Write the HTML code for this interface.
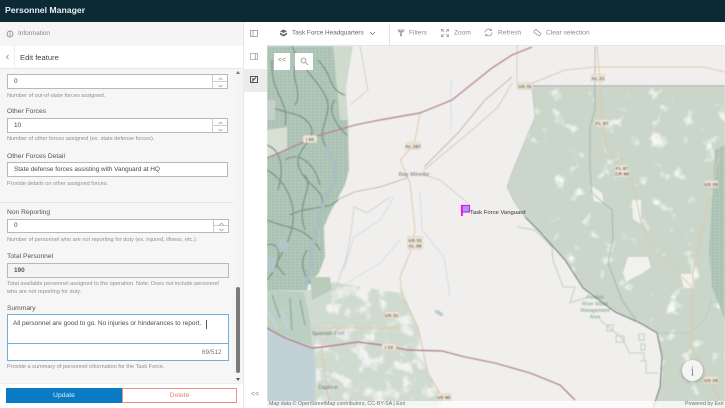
<!DOCTYPE html>
<html><head><meta charset="utf-8"><style>
*{box-sizing:border-box}
html,body{margin:0;padding:0;width:725px;height:408px;overflow:hidden;background:#fff;font-family:"Liberation Sans",sans-serif}
.a{position:absolute}
.lbl{position:absolute;font-size:6.7px;color:#555;white-space:nowrap;margin-top:1.500px}
.hint{position:absolute;font-size:5.6px;color:#8f8f8f;white-space:nowrap;line-height:8px}
.inp{position:absolute;background:#fff;border:1px solid #b8b8b8;font-size:6.4px;color:#4a4a4a;padding-left:6px;white-space:nowrap}
.spin{position:absolute;width:15px;border-left:1px solid #ccc;right:0;top:0;bottom:0}
.spin i{position:absolute;left:0;right:0;height:50%;display:block}
.spin i:first-child{top:0;border-bottom:1px solid #ccc}
.spin i:last-child{bottom:0}
.spin svg{position:absolute;left:4px;top:2px}
.tb{position:absolute;top:33px;transform:translateY(-50%);font-size:6.600px;color:#8a8a8a;white-space:nowrap}
.sh{font:600 4.8px "Liberation Sans",sans-serif;fill:#555;text-anchor:middle}
</style></head><body>

<div class="a" style="left:0;top:0;width:725px;height:22px;background:#0b2a36"></div>
<div class="a" style="left:5px;top:5px;font-size:8.700px;font-weight:bold;color:#e8eef0;white-space:nowrap">Personnel Manager</div>

<!-- left panel -->
<div class="a" style="left:0;top:22px;width:243px;height:386px;background:#f6f6f6"></div>
<div class="a" style="left:0;top:22px;width:243px;height:24px;background:#f5f5f5;"></div>
<svg class="a" style="left:6px;top:30px" width="8" height="8" viewBox="0 0 8 8"><circle cx="4" cy="4" r="3" fill="none" stroke="#777" stroke-width=".7"/><path d="M4 3.400V6M4 2v.7" stroke="#777" stroke-width=".7"/></svg>
<div class="a" style="left:18px;top:30px;font-size:6.400px;color:#888;white-space:nowrap">Information</div>
<div class="a" style="left:0;top:46px;width:243px;height:23px;background:#fff;border-bottom:1px solid #e8e8e8"></div>
<div class="a" style="left:14px;top:46px;width:1px;height:23px;background:#ececec"></div>
<svg class="a" style="left:5px;top:54px" width="5" height="6" viewBox="0 0 5 6"><path d="M3.500 1L1.500 3l2 2" fill="none" stroke="#777" stroke-width=".7"/></svg>
<div class="a" style="left:20px;top:53px;font-size:7.600px;color:#444;white-space:nowrap">Edit feature</div>

<div class="inp" style="left:7px;top:74px;width:221px;height:15px;line-height:13px">0<div class="spin"><i><svg width="7" height="4"><path d="M1.500 3L3.500 1.200 5.500 3" fill="none" stroke="#888" stroke-width=".6"/></svg></i><i><svg width="7" height="4"><path d="M1.500 1L3.500 2.800 5.500 1" fill="none" stroke="#888" stroke-width=".6"/></svg></i></div></div>
<div class="hint" style="left:7px;top:92px">Number of out-of-state forces assigned.</div>
<div class="lbl" style="left:7px;top:106px">Other Forces</div>
<div class="inp" style="left:7px;top:118px;width:221px;height:15px;line-height:13px">10<div class="spin"><i><svg width="7" height="4"><path d="M1.500 3L3.500 1.200 5.500 3" fill="none" stroke="#888" stroke-width=".6"/></svg></i><i><svg width="7" height="4"><path d="M1.500 1L3.500 2.800 5.500 1" fill="none" stroke="#888" stroke-width=".6"/></svg></i></div></div>
<div class="hint" style="left:7px;top:135px">Number of other forces assigned (ex. state defense forces).</div>
<div class="lbl" style="left:7px;top:151px">Other Forces Detail</div>
<div class="inp" style="left:7px;top:162px;width:221px;height:15px;line-height:13px">State defense forces assisting with Vanguard at HQ</div>
<div class="hint" style="left:7px;top:180px">Provide details on other assigned forces.</div>
<div class="a" style="left:0;top:202px;width:233px;height:1px;background:#e6e6e6"></div>
<div class="lbl" style="left:7px;top:207px">Non Reporting</div>
<div class="inp" style="left:7px;top:219px;width:222px;height:14px;line-height:12px">0<div class="spin"><i><svg width="7" height="4"><path d="M1.500 3L3.500 1.200 5.500 3" fill="none" stroke="#888" stroke-width=".6"/></svg></i><i><svg width="7" height="4"><path d="M1.500 1L3.500 2.800 5.500 1" fill="none" stroke="#888" stroke-width=".6"/></svg></i></div></div>
<div class="hint" style="left:7px;top:236px">Number of personnel who are not reporting for duty (ex. injured, illness, etc.).</div>
<div class="lbl" style="left:7px;top:251px">Total Personnel</div>
<div class="inp" style="left:7px;top:263px;width:222px;height:15px;line-height:13px;background:#f3f3f3;font-weight:bold;color:#555">190</div>
<div class="hint" style="left:7px;top:280px;width:222px;white-space:normal">Total available personnel assigned to the operation. Note: Does not include personnel who are not reporting for duty.</div>
<div class="lbl" style="left:7px;top:303px">Summary</div>
<div class="a" style="left:7px;top:314px;width:222px;height:47px;background:#fff;border:1px solid #6cb3dc"></div>
<div class="a" style="left:8px;top:343px;width:220px;height:1px;background:#6cb3dc"></div>
<div class="a" style="left:13px;top:320px;font-size:6.500px;color:#4a4a4a;white-space:nowrap">All personnel are good to go. No injuries or hinderances to report.</div>
<div class="a" style="left:206px;top:320px;width:1px;height:9px;background:#555"></div>
<div class="a" style="left:202px;top:349px;font-size:6.400px;color:#777">69/512</div>
<div class="hint" style="left:7px;top:363px">Provide a summary of personnel information for the Task Force.</div>

<!-- scrollbar -->
<div class="a" style="left:234px;top:69px;width:9px;height:314px;background:#f4f4f4"></div>
<div class="a" style="left:236px;top:287px;width:4px;height:86px;background:#7b7b7b;border-radius:2px"></div>
<div class="a" style="left:236px;top:71px;width:0;height:0;border:2.500px solid transparent;border-bottom:3px solid #777;border-top:0"></div>
<div class="a" style="left:236px;top:378px;width:0;height:0;border:2.500px solid transparent;border-top:3px solid #555;border-bottom:0"></div>

<div class="a" style="left:0;top:383px;width:243px;height:25px;background:#fff;border-top:1px solid #eee"></div>
<div class="a" style="left:6px;top:388px;width:116px;height:15px;background:#0a7ac4;color:#d9eefb;font-size:6.800px;text-align:center;line-height:15px">Update</div>
<div class="a" style="left:122px;top:388px;width:115px;height:15px;background:#fff;border:1px solid #ee8d85;color:#e98379;font-size:6.800px;text-align:center;line-height:13px">Delete</div>

<!-- rail -->
<div class="a" style="left:243px;top:22px;width:24px;height:386px;background:#fff;border-left:1px solid #e8e8e8"></div>
<div class="a" style="left:243px;top:69px;width:24px;height:23px;background:#ececec"></div>
<svg class="a" style="left:250px;top:30px" width="9" height="8" viewBox="0 0 9 8"><rect x=".5" y=".5" width="7" height="6" fill="none" stroke="#888" stroke-width=".7"/><path d="M3 .500v6" stroke="#888" stroke-width=".7"/></svg>
<svg class="a" style="left:250px;top:53px" width="9" height="8" viewBox="0 0 9 8"><rect x=".5" y=".5" width="7" height="6" fill="none" stroke="#999" stroke-width=".7"/><path d="M5.500 .500v6" stroke="#999" stroke-width=".7"/></svg>
<svg class="a" style="left:250px;top:76px" width="9" height="8" viewBox="0 0 9 8"><rect x=".5" y=".5" width="7" height="6" fill="none" stroke="#444" stroke-width=".9"/><path d="M2 5.500l4-4M2 3h2" stroke="#444" stroke-width=".9"/></svg>
<div class="a" style="left:251px;top:391px;font-size:7px;color:#888">&lt;&lt;</div>

<!-- top bar -->
<div class="a" style="left:267px;top:22px;width:458px;height:24px;background:#fff;border-bottom:1px solid #e4e4e4"></div>
<div class="a" style="left:389px;top:24px;width:1px;height:21px;background:#e2e2e2"></div>
<svg class="a" style="left:279px;top:29px" width="9" height="8" viewBox="0 0 9 8"><path d="M4.500 .500L8 2.200 4.500 4 1 2.200z" fill="#666"/><path d="M1 3.500L4.500 5.500 8 3.500V5.500L4.500 7.500 1 5.500z" fill="#666"/></svg>
<div class="tb" style="left:292px;color:#666;font-size:6.400px">Task Force Headquarters</div>
<svg class="a" style="left:369px;top:31px" width="7" height="5"><path d="M1 1l2.500 2.500L6 1" fill="none" stroke="#666" stroke-width=".7"/></svg>
<svg class="a" style="left:397px;top:29px" width="8" height="8" viewBox="0 0 8 8"><path d="M.5 1h7M1.500 1L3.500 4v3l1-.5V4l2-3M1.500 2.500h5" fill="none" stroke="#888" stroke-width=".7"/></svg>
<div class="tb" style="left:409px">Filters</div>
<svg class="a" style="left:441px;top:29px" width="8" height="8" viewBox="0 0 8 8"><path d="M.5 2.500v-2h2M5.500.5h2v2M7.500 5.500v2h-2M2.500 7.500h-2v-2M1 1l2 2M7 1L5 3M7 7L5 5M1 7l2-2" fill="none" stroke="#888" stroke-width=".7"/></svg>
<div class="tb" style="left:454px">Zoom</div>
<svg class="a" style="left:484px;top:28px" width="9" height="9" viewBox="0 0 9 9"><path d="M1 4.500a3.500 3.500 0 0 1 6-2.400M8 4.500a3.500 3.500 0 0 1-6 2.400M7.300.8v1.700H5.600M1.700 8.200V6.500h1.700" fill="none" stroke="#888" stroke-width=".7"/></svg>
<div class="tb" style="left:498px">Refresh</div>
<svg class="a" style="left:533px;top:29px" width="9" height="8" viewBox="0 0 9 8"><path d="M1 2l2-1.500 5 4L6.500 7 1 3.500zM2.500 .500l-1 1" fill="none" stroke="#888" stroke-width=".7"/></svg>
<div class="tb" style="left:546px">Clear selection</div>

<!-- map -->
<svg class="a" style="left:267px;top:46px" width="458" height="362" viewBox="267 46 458 362">
<defs>
<filter id="b" x="-5%" y="-5%" width="110%" height="110%"><feGaussianBlur stdDeviation=".5"/></filter>
<filter id="m" x="0" y="0" width="100%" height="100%"><feTurbulence type="fractalNoise" baseFrequency=".06" numOctaves="3" seed="7"/><feColorMatrix values="0 0 0 0 .93  0 0 0 0 .94  0 0 0 0 .91  5 0 0 0 -3.150"/></filter>
<filter id="m2" x="0" y="0" width="100%" height="100%"><feTurbulence type="fractalNoise" baseFrequency=".07" numOctaves="3" seed="3"/><feColorMatrix values="0 0 0 0 .89  0 0 0 0 .89  0 0 0 0 .88  5 0 0 0 -2.600"/></filter>
<pattern id="h" width="4" height="3" patternUnits="userSpaceOnUse"><rect width="4" height="3" fill="#b3c8bb"/><path d="M0 1h2.500" stroke="#8fac9f" stroke-width=".7"/></pattern>
<clipPath id="ef"><path d="M532 87H725V408H653L660 387L662 357L657 333L640 323L615 312L583 288L565 260L540 232L525 217L515 203L507 187L513 170L520 153L535 117Z"/></clipPath>
<clipPath id="bf"><path d="M333 282L400 293L402 290L418 327L428 373L440 393L445 408H267V340L314 350L320 300Z"/></clipPath>
</defs>
<g filter="url(#b)">
<rect x="267" y="46" width="458" height="362" fill="#f0efed"/>
<!-- east forest -->
<path d="M532 87H725V408H653L660 387L662 357L657 333L640 323L615 312L583 288L565 260L540 232L525 217L515 203L507 187L513 170L520 153L535 117Z" fill="#c9d6c9"/>
<g clip-path="url(#ef)"><rect x="500" y="85" width="225" height="323" filter="url(#m)"/></g>
<g fill="#f1f2ed"><path d="M628 257h20l3 10-8 6-8 4-9 5-3-9z"/><path d="M680 274h14v14h-10z"/><path d="M590 185l12 8 2 10-10-2z"/><path d="M632 200h9v24l-8-5z"/></g>
<!-- east teal edge -->
<path d="M715 150L725 145V320L712 287L709 250Z" fill="url(#h)"/>
<!-- west forest -->
<path d="M267 46H352L345 87L348 120L349 170L345 185L330 213L324 227L325 257L319 273L310 282L300 300L267 300Z" fill="url(#h)"/>
<path d="M333 46H353L346 87L348 120H340Z" fill="#cfdbcc"/>
<path d="M267 130L287 127V150L267 157Z" fill="#d7e0d2"/>
<g fill="none" stroke="#79997f" stroke-width="1.300">
<path d="M292 46C302 70 314 75 325 95S312 130 328 150"/><path d="M267 105C285 115 300 110 310 125S290 150 300 170 330 190 320 215"/><path d="M272 60C270 95 290 100 285 125"/><path d="M267 170C285 180 300 205 290 235S270 260 285 275"/><path d="M290 215C310 205 330 210 338 200"/><path d="M267 220C290 230 305 225 320 250"/><path d="M318 60C333 75 328 90 345 95"/><path d="M307 250C297 265 307 280 312 285"/><path d="M267 145C280 150 285 165 278 190"/><path d="M305 175C315 190 295 200 305 230"/><path d="M335 100C325 110 340 130 347 135"/><path d="M300 60C285 75 305 90 295 105"/><path d="M267 245C280 240 285 260 267 280"/><path d="M285 160C300 150 315 165 320 185"/></g>
<path d="M325 147C335 160 337 170 335 180S326 195 324 203L318 225L314 240L309 270L304 297" fill="none" stroke="#a9bfc3" stroke-width="3.500"/>
<circle cx="283" cy="246" r="6" fill="#b3c5cb"/><rect x="267" y="258" width="8" height="14" fill="#b3c5cb"/>
<path d="M267 100h8v20h-8z" fill="#c6cfc9"/>
<!-- bottom-left -->
<path d="M333 282L400 293L402 290L418 327L428 373L440 393L445 408H267V290L320 290Z" fill="#d0dbd0"/>
<g clip-path="url(#bf)"><rect x="267" y="280" width="180" height="128" filter="url(#m2)"/></g>
<path d="M310 277H330L332 290L312 300Z" fill="#b9cbb9"/>
<!-- bay -->
<path d="M267 327L290 338L314 348L316 375L314 408H267Z" fill="#c2d1d6"/>
<path d="M267 290L304 292L310 320L312 346L285 337L267 327Z" fill="#bcd0c2"/>
<path d="M272 295L280 318M290 298L292 330M300 300L305 325" stroke="#8fb0a3" stroke-width="1.500" fill="none"/>
<path d="M267 310l10 18M282 310l5 18" stroke="#c2d1d6" stroke-width="3" fill="none"/>
<ellipse cx="439" cy="313" rx="5" ry="2" fill="#b9ccd4" transform="rotate(30 439 313)"/>
<!-- green outlines -->
<g fill="none" stroke="#c8d5c5" stroke-width="1.300"><path d="M517 227l18 3 17 17 1 13 10 27h12l-5 16 18-6"/><rect x="607" y="325" width="6" height="6"/><rect x="616" y="336" width="8" height="6"/><rect x="639" y="334" width="5" height="6"/><rect x="641" y="344" width="4" height="6"/><path d="M630 353h14v8M640 361h6v12h12"/><path d="M600 320l22 18 8 16"/></g>
<!-- state line -->
<path d="M532 86H725" stroke="#a5a5a2" stroke-width="1.300"/>
<path d="M517 46V85" stroke="#a8a8a6" stroke-width=".7" stroke-dasharray="2 1"/>
<!-- dark river boundary -->
<path d="M525 217L540 232L565 260L583 288L615 312L640 323L657 333L662 357L660 387L653 408" fill="none" stroke="#5f6c69" stroke-width="1"/>
<path d="M532 87L535 117L520 153L513 170L507 187L515 203L525 217" fill="none" stroke="#c3c6bf" stroke-width=".8"/>
<!-- roads grey -->
<g fill="none" stroke="#c3c4c2" stroke-width=".7">
<path d="M390 197L367 213L354 207"/><path d="M354 207C352 225 350 245 345 262L335 290"/>
<path d="M657 333H690L705 320L712 300"/><path d="M360 46L368 90L350 105"/>
<path d="M424 175L440 180L470 205"/>
</g>
<path d="M595 46V110L590 127V170L592 193L612 210L613 237L608 263L622 300L638 323" fill="none" stroke="#a6a8a5" stroke-width=".8"/>
<path d="M512 77L485 100L458 133L424 167" fill="none" stroke="#a3a4a4" stroke-width=".8"/>
<path d="M407 178L380 187L354 192L337 200" fill="none" stroke="#aaa" stroke-width=".8"/>
<g fill="none" stroke="#c5d5dc" stroke-width=".7"><path d="M394 197L380 220L354 237L344 270"/><path d="M420 193L422 230L444 257L450 297"/><path d="M400 240L380 263L347 283"/><path d="M452 80C448 100 454 120 450 130"/></g>
<!-- tan roads -->
<g fill="none" stroke="#e0c8a8" stroke-width="1">
<path d="M420 113L415 140L413 146L400 160L410 183L415 230L410 253L400 277L402 297L418 327L428 373L440 393"/>
<path d="M512 83L498 107L472 130L424 170"/>
<path d="M525 86L565 70L595 67H703L725 72"/>
<path d="M597 46L600 83L602 120L607 150L617 163L632 180L642 227L658 253L692 287"/>
<path d="M720 150L718 160L705 217L693 273L692 350L710 380L720 400"/>
<path d="M330 333L322 347L326 380L330 408"/>
<path d="M312 328H400"/>
</g>
<!-- interstates -->
<path d="M267 158L304 142L310 138L355 125L380 120L420 113L452 100L492 68L512 55L532 47" fill="none" stroke="#b5808c" stroke-width="1.400"/>
<path d="M265 327L285 338L312 348L323 347L358 342L382 345L408 350L442 351L465 357L495 363L530 373L560 385L575 400" fill="none" stroke="#b07f8d" stroke-width="1.400"/>
<!-- shields -->
<g fill="#eee4d6" stroke="#d6cbb9" stroke-width=".5">
<rect x="303" y="135.500" width="14" height="7" rx="1"/><rect x="517" y="82.500" width="16" height="7" rx="1"/><rect x="591" y="74.500" width="14" height="7" rx="1"/><rect x="595" y="119.500" width="14" height="7" rx="1"/><rect x="615" y="165" width="14" height="12" rx="1"/><rect x="704" y="180.500" width="14" height="7" rx="1"/><rect x="405.500" y="142.500" width="15" height="7" rx="1"/><rect x="407.500" y="236.500" width="15" height="13" rx="1"/><rect x="384" y="311.500" width="15" height="7" rx="1"/><rect x="382" y="343.500" width="14" height="7" rx="1"/><rect x="436" y="393.500" width="15" height="7" rx="1"/><rect x="704" y="376.500" width="14" height="7" rx="1"/>
</g>
<g>
<text class="sh" x="310" y="141">I 65</text><text class="sh" x="525" y="88">US 31</text><text class="sh" x="598" y="80">AL 21</text><text class="sh" x="602" y="125">FL 97</text><text class="sh" x="622" y="170">FL 97</text><text class="sh" x="622" y="175.500">CR 99</text><text class="sh" x="711" y="186">US 29</text><text class="sh" x="413" y="148">AL 287</text><text class="sh" x="415" y="242">US 31</text><text class="sh" x="415" y="247.500">AL 59</text><text class="sh" x="391.500" y="317">US 31</text><text class="sh" x="389" y="349">I 10</text><text class="sh" x="443.500" y="399">US 90</text><text class="sh" x="711" y="382">US 29</text>
</g>
<text x="414" y="176" font-size="5.800" fill="#555" text-anchor="middle" font-family="Liberation Sans">Bay Minette</text>
<text x="328" y="335" font-size="5.800" fill="#666" font-family="Liberation Sans" text-anchor="middle">Spanish Fort</text>
<text x="328" y="389" font-size="5.500" fill="#666" font-family="Liberation Sans" text-anchor="middle">Daphne</text>
<g font-size="5" font-style="italic" fill="#5e9a72" text-anchor="middle" font-family="Liberation Sans"><text x="595" y="299">Perdido</text><text x="595" y="305.500">River Water</text><text x="595" y="312">Management</text><text x="595" y="318.500">Area</text></g>
</g>
<!-- marker -->
<rect x="461.500" y="205.500" width="8" height="6.500" fill="#96a0f5" stroke="#f010e0" stroke-width="1.200"/>
<rect x="461" y="205" width="1.800" height="11" fill="#f010e0"/>
<text x="470" y="214" font-size="5.900" fill="#333" font-family="Liberation Sans">Task Force Vanguard</text>
</svg>

<!-- map controls -->
<div class="a" style="left:274px;top:53px;width:16px;height:17px;background:#fff;color:#888;font-size:7px;text-align:center;line-height:16px">&lt;&lt;</div>
<div class="a" style="left:295px;top:53px;width:18px;height:17px;background:#fff"></div>
<svg class="a" style="left:300px;top:57px" width="9" height="9" viewBox="0 0 9 9"><circle cx="3.500" cy="3.500" r="2.500" fill="none" stroke="#888" stroke-width=".7"/><path d="M5.500 5.500L8 8" stroke="#888" stroke-width=".8"/></svg>
<div class="a" style="left:682px;top:360px;width:21px;height:21px;border-radius:50%;background:#f4f4f4;box-shadow:0 1px 3px rgba(0,0,0,.3)"></div>
<svg class="a" style="left:690px;top:365px" width="5" height="11" viewBox="0 0 5 11"><path d="M2.500 1.500V2.500M2.500 4V10M1.500 4h1M1.500 10h2" stroke="#666" stroke-width=".7" fill="none"/></svg>

<div class="a" style="left:267px;top:401px;width:458px;height:7px;background:rgba(255,255,255,.75)"></div>
<div class="a" style="left:269px;top:401px;font-size:5.300px;color:#6e6e6e;line-height:7px;white-space:nowrap">Map data © OpenStreetMap contributors, CC-BY-SA | Esri</div>
<div class="a" style="left:685px;top:401px;font-size:5.300px;color:#6e6e6e;line-height:7px;white-space:nowrap">Powered by Esri</div>
</body></html>
